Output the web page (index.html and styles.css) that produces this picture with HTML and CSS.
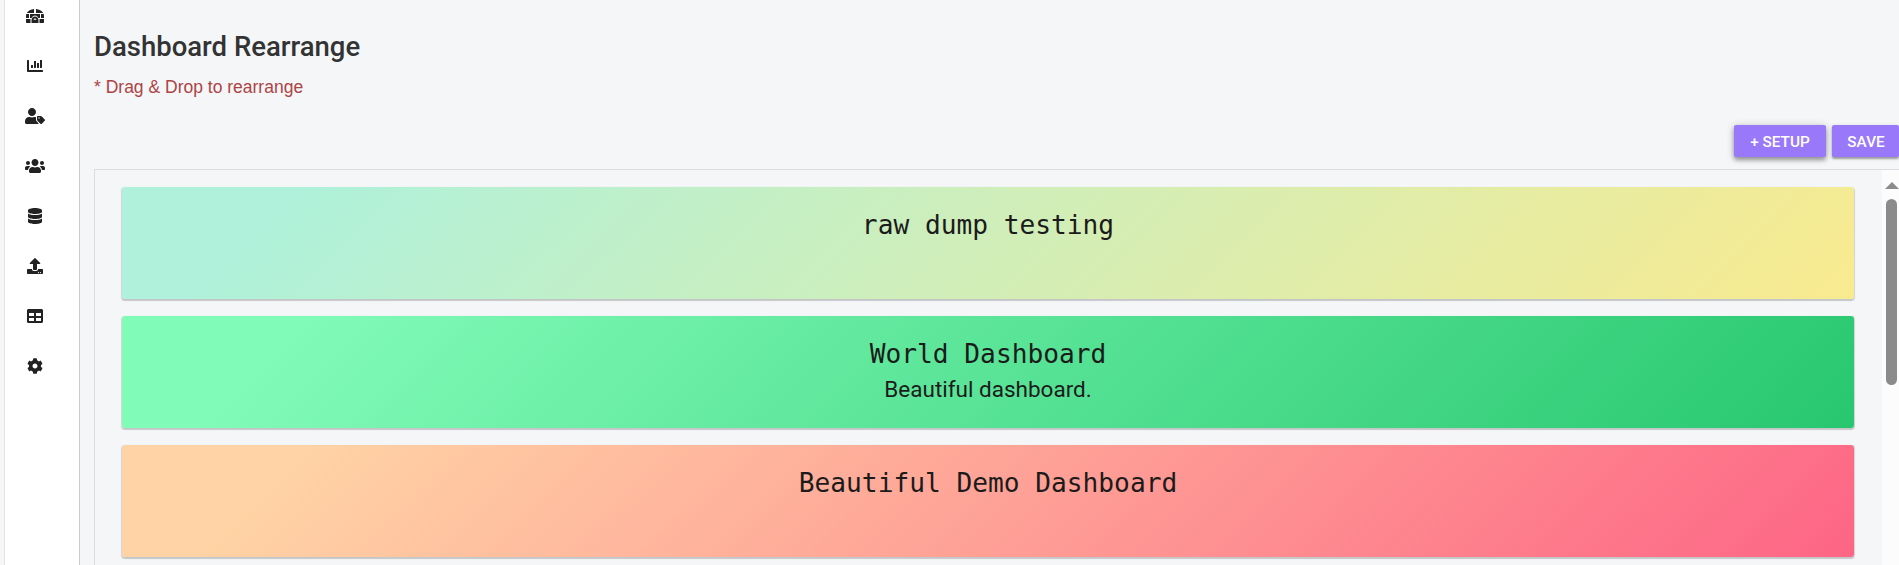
FILE: index.html
```html
<!DOCTYPE html>
<html lang="en">
<head>
<meta charset="utf-8">
<title>Dashboard Rearrange</title>
<link rel="stylesheet" href="styles.css">
</head>
<body>
<div class="app">
  <nav class="sidebar">
    <svg class="icon" viewBox="0 0 576 512"><path d="M320 34v126H550C508 93 424 46 320 34zM256 34C152 46 68 93 26 160H256V34zM10 192C3 215 0 250 0 320H96V192H10zM128 192v128h52c18-52 60-80 108-80s90 28 108 80h52V192H128zM480 192v128h96c0-70-3-105-10-128h-86zM0 352v96c0 17.700 14.300 32 32 32h112V352H0zM432 352v128h112c17.700 0 32-14.300 32-32v-96H432zM288 272c-62 0-112 50-112 112v96h64v-96c0-26 22-48 48-48s48 22 48 48v96h64v-96c0-62-50-112-112-112zM240 376h96v104h-96z"/></svg>
    <svg class="icon" viewBox="0 0 512 512"><path d="M332.800 320h38.400c6.400 0 12.800-6.400 12.800-12.800V172.800c0-6.400-6.400-12.800-12.800-12.800h-38.400c-6.400 0-12.800 6.400-12.800 12.800v134.400c0 6.400 6.400 12.800 12.800 12.800zm96 0h38.400c6.400 0 12.800-6.400 12.800-12.800V76.800c0-6.400-6.400-12.800-12.800-12.800h-38.400c-6.400 0-12.800 6.400-12.800 12.800v230.400c0 6.400 6.400 12.800 12.800 12.800zm-288 0h38.400c6.400 0 12.800-6.400 12.800-12.800v-70.400c0-6.400-6.400-12.800-12.800-12.800h-38.400c-6.400 0-12.800 6.400-12.800 12.800v70.400c0 6.400 6.400 12.800 12.800 12.800zm96 0h38.400c6.400 0 12.800-6.400 12.800-12.800V108.800c0-6.400-6.400-12.800-12.800-12.800h-38.400c-6.400 0-12.800 6.400-12.800 12.800v198.400c0 6.400 6.400 12.800 12.800 12.800zM496 384H64V80c0-8.840-7.160-16-16-16H16C7.160 64 0 71.160 0 80v336c0 17.670 14.330 32 32 32h464c8.840 0 16-7.160 16-16v-32c0-8.840-7.160-16-16-16z"/></svg>
    <svg class="icon" viewBox="0 0 640 512"><path d="M630.600 364.900l-90.300-90.200c-12-12-28.300-18.700-45.300-18.700h-79.300c-17.700 0-32 14.300-32 32v79.200c0 17 6.700 33.200 18.700 45.200l90.300 90.200c12.500 12.500 32.800 12.500 45.300 0l92.500-92.500c12.600-12.500 12.600-32.700.1-45.200zm-182.800-21c-13.300 0-24-10.700-24-24s10.700-24 24-24 24 10.700 24 24c0 13.200-10.700 24-24 24zm-223.800-88c70.700 0 128-57.300 128-128C352 57.300 294.700 0 224 0S96 57.300 96 128c0 70.600 57.300 127.900 128 127.900zm127.800 111.200V294c-12.200-3.600-24.900-6.200-38.200-6.200h-16.700c-22.200 10.200-46.900 16-72.900 16s-50.600-5.800-72.900-16h-16.700C60.200 287.900 0 348.100 0 422.300v41.600c0 26.500 21.500 48 48 48h352c15.500 0 29.100-7.500 37.900-18.900l-58-58c-18.100-18.100-28.100-42.200-28.100-67.900z"/></svg>
    <svg class="icon" viewBox="0 0 640 512"><path d="M96 224c35.300 0 64-28.700 64-64s-28.700-64-64-64-64 28.700-64 64 28.700 64 64 64zm448 0c35.300 0 64-28.700 64-64s-28.700-64-64-64-64 28.700-64 64 28.700 64 64 64zm32 32h-64c-17.600 0-33.500 7.100-45.100 18.600 40.300 22.100 68.900 62 75.100 109.400h66c17.700 0 32-14.300 32-32v-32c0-35.300-28.700-64-64-64zm-256 0c61.900 0 112-50.100 112-112S381.900 32 320 32 208 82.100 208 144s50.100 112 112 112zm76.800 32h-8.300c-20.800 10-43.900 16-68.500 16s-47.600-6-68.500-16h-8.300C179.600 288 128 339.600 128 403.200V432c0 26.500 21.500 48 48 48h288c26.500 0 48-21.500 48-48v-28.800c0-63.600-51.600-115.200-115.200-115.200zm-223.700-13.400C161.500 263.100 145.600 256 128 256H64c-35.300 0-64 28.700-64 64v32c0 17.700 14.300 32 32 32h65.900c6.300-47.400 34.900-87.300 75.200-109.400z"/></svg>
    <svg class="icon" viewBox="0 0 448 512"><path d="M448 73.143v45.714C448 159.143 347.667 192 224 192S0 159.143 0 118.857V73.143C0 32.857 100.333 0 224 0s224 32.857 224 73.143zM448 176v102.857C448 319.143 347.667 352 224 352S0 319.143 0 278.857V176c48.125 33.143 136.208 48.572 224 48.572S399.874 209.143 448 176zm0 160v102.857C448 479.143 347.667 512 224 512S0 479.143 0 438.857V336c48.125 33.143 136.208 48.572 224 48.572S399.874 369.143 448 336z"/></svg>
    <svg class="icon" viewBox="0 0 512 512"><path d="M296 384h-80c-13.300 0-24-10.700-24-24V192h-87.700c-17.800 0-26.700-21.500-14.100-34.100L242.300 5.700c7.500-7.500 19.800-7.500 27.300 0l152.200 152.200c12.600 12.600 3.700 34.100-14.100 34.100H320v168c0 13.300-10.700 24-24 24zm216-8v112c0 13.300-10.700 24-24 24H24c-13.300 0-24-10.700-24-24V376c0-13.300 10.700-24 24-24h136v8c0 30.900 25.100 56 56 56h80c30.900 0 56-25.100 56-56v-8h136c13.300 0 24 10.700 24 24zm-124 88c0-11-9-20-20-20s-20 9-20 20 9 20 20 20 20-9 20-20zm64 0c0-11-9-20-20-20s-20 9-20 20 9 20 20 20 20-9 20-20z"/></svg>
    <svg class="icon" viewBox="0 0 512 512"><path d="M464 32H48C21.490 32 0 53.490 0 80v352c0 26.510 21.490 48 48 48h416c26.510 0 48-21.490 48-48V80c0-26.510-21.490-48-48-48zM224 416H64v-96h160v96zm0-160H64v-96h160v96zm224 160H288v-96h160v96zm0-160H288v-96h160v96z"/></svg>
    <svg class="icon" viewBox="0 0 512 512"><path d="M487.400 315.700l-42.600-24.600c4.300-23.200 4.300-47 0-70.200l42.600-24.600c4.900-2.800 7.100-8.600 5.500-14-11.100-35.600-30-67.800-54.700-94.600-3.800-4.100-10-5.100-14.800-2.300L380.800 110c-17.900-15.400-38.500-27.300-60.800-35.100V25.800c0-5.600-3.900-10.500-9.400-11.700-36.700-8.200-74.300-7.800-109.200 0-5.500 1.200-9.400 6.100-9.400 11.700V75c-22.200 7.900-42.800 19.800-60.800 35.100L88.700 85.500c-4.900-2.800-11-1.900-14.800 2.300-24.700 26.700-43.600 58.900-54.700 94.600-1.700 5.400.6 11.200 5.500 14L67.300 221c-4.300 23.200-4.300 47 0 70.200l-42.600 24.600c-4.900 2.800-7.100 8.600-5.500 14 11.100 35.600 30 67.800 54.700 94.600 3.800 4.100 10 5.100 14.800 2.300l42.600-24.600c17.900 15.400 38.500 27.300 60.800 35.100v49.200c0 5.600 3.900 10.500 9.400 11.700 36.700 8.200 74.300 7.800 109.200 0 5.500-1.200 9.400-6.100 9.400-11.700v-49.200c22.200-7.900 42.800-19.800 60.800-35.100l42.600 24.600c4.900 2.800 11 1.900 14.800-2.300 24.700-26.700 43.600-58.900 54.700-94.600 1.500-5.500-.7-11.300-5.600-14.100zM256 336c-44.100 0-80-35.900-80-80s35.900-80 80-80 80 35.900 80 80-35.900 80-80 80z"/></svg>
  </nav>
  <main class="content">
    <h1 class="title">Dashboard Rearrange</h1>
    <p class="hint">* Drag &amp; Drop to rearrange</p>
    <div class="actions">
      <button class="btn btn-raised">+ SETUP</button>
      <button class="btn">SAVE</button>
    </div>
    <div class="panel">
      <div class="list">
        <section class="card card-mint"><h2 class="card-title">raw dump testing</h2></section>
        <section class="card card-green"><h2 class="card-title">World Dashboard</h2><p class="card-text">Beautiful dashboard.</p></section>
        <section class="card card-coral"><h2 class="card-title">Beautiful Demo Dashboard</h2></section>
      </div>
      <div class="scrollbar">
        <div class="arrow"></div>
        <div class="thumb"></div>
      </div>
    </div>
  </main>
</div>
</body>
</html>
```

FILE: styles.css
```css
* { box-sizing: border-box; margin: 0; }
body {
  height: 565px;
  overflow: hidden;
  background: #f4f6f8;
  font-family: Roboto, sans-serif;
  color: #222;
}
.app { display: flex; height: 565px; padding-left: 4px; }
.sidebar {
  flex: 0 0 76px;
  display: flex;
  flex-direction: column;
  gap: 34px;
  padding: 8px 15px 0 0;
  align-items: center;
  background: #fff;
  border-left: 1px solid #e4e4e5;
  border-right: 1px solid #ccc;
}
.icon { flex: none; height: 16px; fill: #222; }
.content {
  flex: 1;
  min-width: 0;
  display: flex;
  flex-direction: column;
  padding: 30px 0 0 14px;
}
.title { font-size: 27.500px; line-height: 34px; font-weight: 500; color: #333; }
.hint {
  margin-top: 11px;
  font: 17.500px/24px "Liberation Sans", sans-serif;
  color: #ad4444;
}
.actions { display: flex; justify-content: flex-end; gap: 6px; margin-top: 26px; }
.btn {
  height: 32px;
  padding: 2px 16px 0;
  border: 0;
  border-radius: 2px;
  background: #9a78fa;
  color: #fff;
  font: 500 15.300px/30px Roboto, sans-serif;
  white-space: nowrap;
  box-shadow: 0 2px 2px rgba(0, 0, 0, .3), 0 1px 4px rgba(0, 0, 0, .15);
}
.btn:last-child { width: 67px; padding-right: 14px; padding-left: 15px; }
.btn-raised { width: 92px; padding: 2px 0 0; box-shadow: 0 3px 4px rgba(0, 0, 0, .32), 0 1px 9px rgba(0, 0, 0, .2); }
.panel {
  flex: 1;
  min-height: 0;
  display: flex;
  margin-top: 12px;
  border: 1px solid #dcdde0;
  border-width: 1px 0 0 1px;
}
.list {
  flex: 1;
  display: flex;
  flex-direction: column;
  gap: 17px;
  padding: 17px 28px 0 27px;
}
.card {
  flex: 0 0 112px;
  padding-top: 20px;
  border-radius: 3px;
  text-align: center;
  box-shadow: 0 1px 1px 1px rgba(0, 0, 0, .14), 0 2px 1px rgba(0, 0, 0, .06);
}
.card-mint { background: linear-gradient(135deg, #aff1da 10%, #f9ea8f 100%); }
.card-green { background: linear-gradient(135deg, #81fbb8 10%, #28c76f 100%); }
.card-coral { background: linear-gradient(135deg, #ffd3a5 10%, #fd6585 100%); }
.card-title {
  font: 400 26.200px/36px "DejaVu Sans Mono", monospace;
  color: #1b1b1b;
}
.card-text { font-size: 22.500px; line-height: 34px; color: #1b1b1b; }
.scrollbar {
  flex: 0 0 17px;
  display: flex;
  flex-direction: column;
  align-items: center;
  padding-top: 12px;
  background: #fcfcfc;
}
.arrow {
  border: 7px solid transparent;
  border-top: 0;
  border-bottom: 7px solid #8b8b8b;
  margin-left: 2px;
}
.thumb { width: 11px; height: 186px; margin: 10px 0 0 2px; border-radius: 6px; background: #8b8b8b; }
```
